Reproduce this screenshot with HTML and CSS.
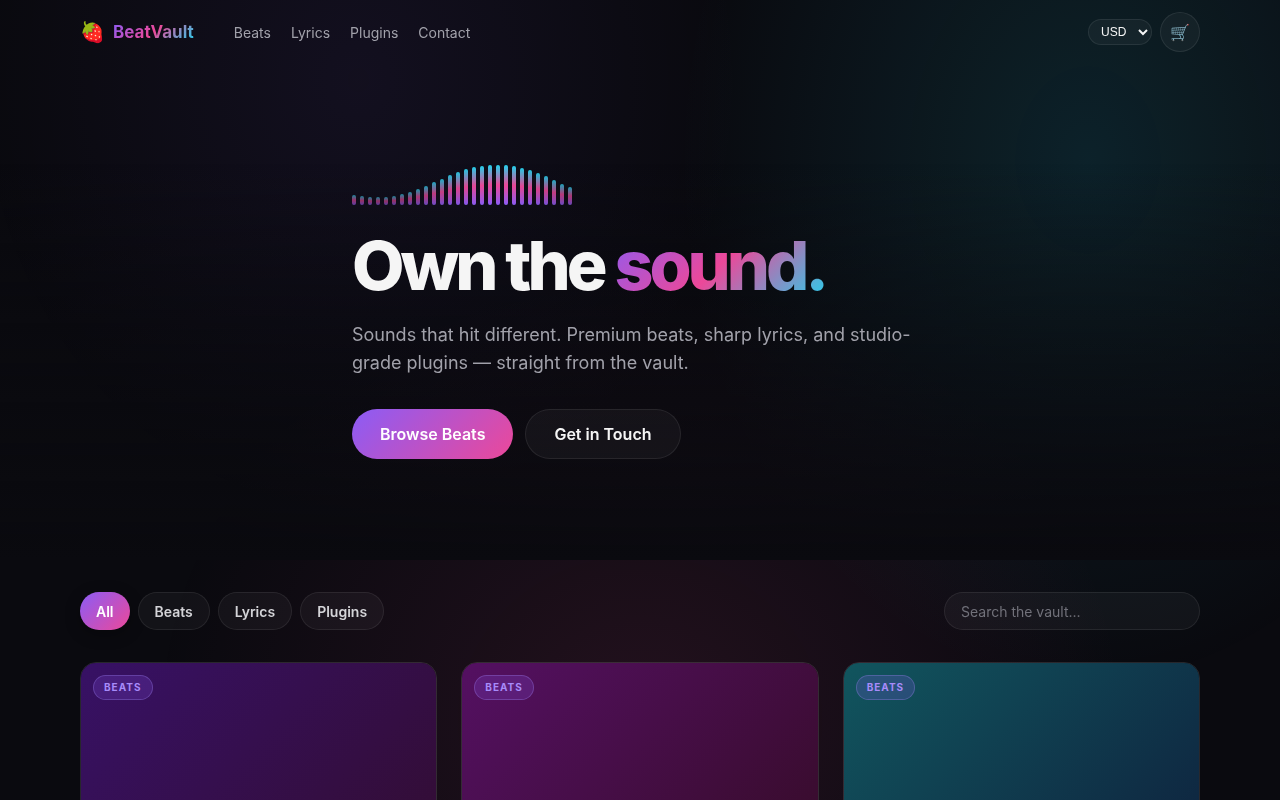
FILE: index.html
```html
<!DOCTYPE html>
<html lang="en">
<head>
    <meta charset="UTF-8">
    <meta name="viewport" content="width=device-width, initial-scale=1.0">
    <title>BeatVault</title>
    <link rel="stylesheet" href="styles.css">
</head>
<body>
    <header class="header">
        <div class="container header-inner">
            <a href="#" class="logo">
                <span class="logo-icon">🍓</span>
                <span class="logo-text gradient-text">BeatVault</span>
            </a>
            <nav class="nav">
                <a href="#beats">Beats</a>
                <a href="#lyrics">Lyrics</a>
                <a href="#plugins">Plugins</a>
                <a href="#contact">Contact</a>
            </nav>
            <div class="header-actions">
                <select class="currency" aria-label="Currency">
                    <option>USD</option>
                    <option>EUR</option>
                    <option>GBP</option>
                </select>
                <button class="cart-btn" type="button" aria-label="Cart">🛒</button>
            </div>
        </div>
    </header>

    <main>
        <section class="hero">
            <div class="hero-content">
                <div class="wave" id="wave"></div>
                <h1>Own the <span class="gradient-text">sound.</span></h1>
                <p class="hero-text">Sounds that hit different. Premium beats, sharp lyrics, and studio-grade plugins — straight from the vault.</p>
                <div class="hero-buttons">
                    <a href="#beats" class="btn btn-primary">Browse Beats</a>
                    <a href="#contact" class="btn btn-ghost">Get in Touch</a>
                </div>
            </div>
        </section>

        <section class="container catalog" id="beats">
            <div class="toolbar">
                <div class="filters">
                    <button class="chip active" type="button">All</button>
                    <button class="chip" type="button">Beats</button>
                    <button class="chip" type="button">Lyrics</button>
                    <button class="chip" type="button">Plugins</button>
                </div>
                <input class="search" type="search" placeholder="Search the vault..." aria-label="Search the vault">
            </div>

            <div class="grid">
                <article class="card">
                    <div class="cover cover-violet"><span class="badge">Beats</span></div>
                </article>
                <article class="card">
                    <div class="cover cover-pink"><span class="badge">Beats</span></div>
                </article>
                <article class="card">
                    <div class="cover cover-cyan"><span class="badge">Beats</span></div>
                </article>
            </div>
        </section>
    </main>

    <script>
        // Waveform bars, heights in px
        const levels = [10, 9, 8, 8, 8, 9, 11, 13, 16, 19, 23, 26, 30, 33, 36, 38, 39, 40, 40, 40, 39, 37, 35, 32, 29, 25, 21, 18];
        const wave = document.getElementById('wave');

        levels.forEach(level => {
            const bar = document.createElement('span');
            bar.classList.add('bar');
            bar.style.height = `${level}px`;
            bar.style.opacity = 0.5 + level / 80;
            wave.appendChild(bar);
        });
    </script>
</body>
</html>
```
FILE: styles.css
```css
* {
    margin: 0;
    padding: 0;
    box-sizing: border-box;
}

:root {
    --bg: #0a0a0f;
    --text: #f5f5f5;
    --muted: #a1a1aa;
    --surface: rgba(255, 255, 255, 0.04);
    --line: rgba(255, 255, 255, 0.08);
    --violet: #8b5cf6;
    --pink: #ec4899;
    --cyan: #22d3ee;
}

body {
    font-family: Inter, 'Liberation Sans', sans-serif;
    color: var(--text);
    background-color: var(--bg);
    min-height: 100vh;
    overflow-x: hidden;
}

/* Ambient glow behind the page */
body::before {
    content: "";
    position: fixed;
    inset: 0;
    z-index: -1;
    background:
        radial-gradient(ellipse 38% 55% at 50% 90%, rgba(236, 72, 153, 0.11), transparent),
        radial-gradient(ellipse 32% 66% at 85% 20%, rgba(34, 211, 238, 0.12), transparent),
        radial-gradient(ellipse 30% 55% at 28% 10%, rgba(139, 92, 246, 0.07), transparent);
}

a {
    color: inherit;
    text-decoration: none;
}

button,
input {
    font-family: inherit;
    color: inherit;
}

.container {
    width: 100%;
    max-width: 1168px;
    margin: 0 auto;
    padding: 0 24px;
}

.gradient-text {
    background: linear-gradient(135deg, var(--violet), var(--pink) 50%, var(--cyan));
    background-clip: text;
    -webkit-background-clip: text;
    color: transparent;
}

/* Header */
.header-inner {
    display: flex;
    align-items: center;
    height: 64px;
}

.logo {
    display: flex;
    align-items: center;
    gap: 8px;
    font-size: 17px;
    font-weight: 700;
    margin-right: 40px;
}

.logo-icon {
    font-size: 20px;
}

.nav {
    display: flex;
    gap: 20px;
    font-size: 14px;
    color: var(--muted);
}

.header-actions {
    display: flex;
    align-items: center;
    gap: 8px;
    margin-left: auto;
}

.currency {
    font-family: 'Liberation Sans', sans-serif;
    font-size: 12px;
    color: var(--text);
    background-color: var(--surface);
    border: 1px solid var(--line);
    border-radius: 999px;
    height: 26px;
    padding: 0 8px;
}

.cart-btn {
    width: 40px;
    height: 40px;
    font-size: 16px;
    background: var(--surface);
    border: 1px solid var(--line);
    border-radius: 50%;
}

/* Hero */
.hero {
    padding: 101px 24px;
    background: linear-gradient(to bottom, transparent 20%, var(--bg));
}

.hero-content {
    max-width: 576px;
    margin: 0 auto;
}

.wave {
    display: flex;
    align-items: flex-end;
    gap: 4px;
    height: 40px;
    margin-bottom: 24px;
}

.bar {
    width: 4px;
    border-radius: 2px;
    background: linear-gradient(to top, var(--violet), var(--pink), var(--cyan));
}

h1 {
    font-size: 68px;
    font-weight: 800;
    line-height: 72px;
    letter-spacing: -4px;
    margin-bottom: 20px;
}

.hero-text {
    font-size: 18px;
    line-height: 28px;
    color: var(--muted);
    margin-bottom: 32px;
}

.hero-buttons {
    display: flex;
    gap: 12px;
}

.btn {
    font-size: 16px;
    font-weight: 600;
    line-height: 24px;
    padding: 12px 28px;
    border: 1px solid var(--line);
    border-radius: 999px;
}

.btn-primary {
    color: #fff;
    background: linear-gradient(135deg, var(--violet), var(--pink));
    border: none;
    padding: 13px 28px;
}

.btn-ghost {
    background: var(--surface);
}

/* Catalog */
.catalog {
    padding-top: 32px;
    padding-bottom: 64px;
}

.toolbar {
    display: flex;
    align-items: center;
    justify-content: space-between;
    margin-bottom: 32px;
}

.filters {
    display: flex;
    gap: 8px;
}

.chip {
    height: 38px;
    padding: 0 16px;
    font-size: 14px;
    font-weight: 600;
    color: #d4d4d8;
    background: var(--surface);
    border: 1px solid var(--line);
    border-radius: 999px;
}

.chip.active {
    color: #fff;
    background: linear-gradient(135deg, var(--violet), var(--pink));
    border: none;
    box-shadow: 0 4px 16px rgba(0, 0, 0, 0.3);
}

.search {
    width: 256px;
    height: 38px;
    padding: 0 16px;
    font-size: 14px;
    background: var(--surface);
    border: 1px solid var(--line);
    border-radius: 999px;
}

.search::placeholder {
    color: #71717a;
}

.grid {
    display: grid;
    grid-template-columns: repeat(3, 1fr);
    gap: 24px;
}

.card {
    border: 1px solid rgba(255, 255, 255, 0.12);
    border-radius: 16px;
    overflow: hidden;
}

.cover {
    aspect-ratio: 4 / 3;
    padding: 12px;
}

.cover-violet {
    background: linear-gradient(135deg, #371165, #320c2c);
}

.cover-pink {
    background: linear-gradient(135deg, #541062, #330b22);
}

.cover-cyan {
    background: linear-gradient(135deg, #11555e, #0e1c3a);
}

.badge {
    display: inline-block;
    font-size: 10px;
    font-weight: 700;
    line-height: 15px;
    letter-spacing: 1px;
    text-transform: uppercase;
    color: #a78bfa;
    background: rgba(139, 92, 246, 0.2);
    border: 1px solid rgba(167, 139, 250, 0.3);
    border-radius: 999px;
    padding: 4px 10px;
}
```
